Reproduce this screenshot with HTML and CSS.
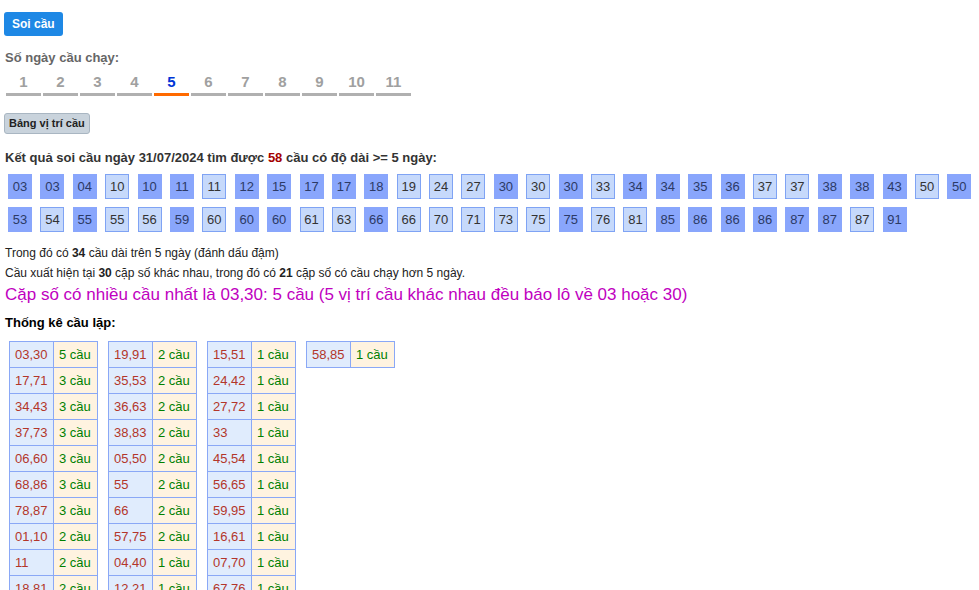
FILE: index.html
```html
<!DOCTYPE html>
<html lang="vi">
<head>
<meta charset="utf-8">
<title>Soi cầu</title>
<link rel="stylesheet" href="styles.css">
</head>
<body>
<div class="page">
  <div class="top"><button class="btn-soi">Soi cầu</button></div>
  <div class="label">Số ngày cầu chạy:</div>
  <div class="tabs">
    <span class="tab">1</span><span class="tab">2</span><span class="tab">3</span><span class="tab">4</span><span class="tab active">5</span><span class="tab">6</span><span class="tab">7</span><span class="tab">8</span><span class="tab">9</span><span class="tab">10</span><span class="tab">11</span>
  </div>
  <div class="bang-row"><button class="btn-bang">Bảng vị trí cầu</button></div>
  <div class="result">Kết quả soi cầu ngày 31/07/2024 tìm được <span class="red">58</span> cầu có độ dài &gt;= 5 ngày:</div>
  <div class="boxes">
    <span class="box d">03</span><span class="box d">03</span><span class="box d">04</span><span class="box">10</span><span class="box d">10</span><span class="box d">11</span><span class="box">11</span><span class="box d">12</span><span class="box d">15</span><span class="box d">17</span><span class="box d">17</span><span class="box d">18</span><span class="box">19</span><span class="box">24</span><span class="box">27</span><span class="box d">30</span><span class="box">30</span><span class="box d">30</span><span class="box">33</span><span class="box d">34</span><span class="box d">34</span><span class="box d">35</span><span class="box d">36</span><span class="box">37</span><span class="box">37</span><span class="box d">38</span><span class="box d">38</span><span class="box d">43</span><span class="box">50</span><span class="box d">50</span>
    <span class="box d">53</span><span class="box">54</span><span class="box d">55</span><span class="box">55</span><span class="box">56</span><span class="box d">59</span><span class="box">60</span><span class="box d">60</span><span class="box d">60</span><span class="box">61</span><span class="box">63</span><span class="box d">66</span><span class="box">66</span><span class="box">70</span><span class="box">71</span><span class="box">73</span><span class="box">75</span><span class="box d">75</span><span class="box">76</span><span class="box">81</span><span class="box d">85</span><span class="box d">86</span><span class="box d">86</span><span class="box d">86</span><span class="box d">87</span><span class="box d">87</span><span class="box">87</span><span class="box d">91</span>
  </div>
  <div class="info">Trong đó có <b>34</b> cầu dài trên 5 ngày (đánh dấu đậm)</div>
  <div class="info">Cầu xuất hiện tại <b>30</b> cặp số khác nhau, trong đó có <b>21</b> cặp số có cầu chạy hơn 5 ngày.</div>
  <div class="highlight">Cặp số có nhiều cầu nhất là 03,30: 5 cầu (5 vị trí cầu khác nhau đều báo lô về 03 hoặc 30)</div>
  <div class="stat-title">Thống kê cầu lặp:</div>
  <div class="tables">
    <table class="stat">
      <tr><td class="p">03,30</td><td class="c">5 cầu</td></tr>
      <tr><td class="p">17,71</td><td class="c">3 cầu</td></tr>
      <tr><td class="p">34,43</td><td class="c">3 cầu</td></tr>
      <tr><td class="p">37,73</td><td class="c">3 cầu</td></tr>
      <tr><td class="p">06,60</td><td class="c">3 cầu</td></tr>
      <tr><td class="p">68,86</td><td class="c">3 cầu</td></tr>
      <tr><td class="p">78,87</td><td class="c">3 cầu</td></tr>
      <tr><td class="p">01,10</td><td class="c">2 cầu</td></tr>
      <tr><td class="p">11</td><td class="c">2 cầu</td></tr>
      <tr><td class="p">18,81</td><td class="c">2 cầu</td></tr>
    </table>
    <table class="stat">
      <tr><td class="p">19,91</td><td class="c">2 cầu</td></tr>
      <tr><td class="p">35,53</td><td class="c">2 cầu</td></tr>
      <tr><td class="p">36,63</td><td class="c">2 cầu</td></tr>
      <tr><td class="p">38,83</td><td class="c">2 cầu</td></tr>
      <tr><td class="p">05,50</td><td class="c">2 cầu</td></tr>
      <tr><td class="p">55</td><td class="c">2 cầu</td></tr>
      <tr><td class="p">66</td><td class="c">2 cầu</td></tr>
      <tr><td class="p">57,75</td><td class="c">2 cầu</td></tr>
      <tr><td class="p">04,40</td><td class="c">1 cầu</td></tr>
      <tr><td class="p">12,21</td><td class="c">1 cầu</td></tr>
    </table>
    <table class="stat">
      <tr><td class="p">15,51</td><td class="c">1 cầu</td></tr>
      <tr><td class="p">24,42</td><td class="c">1 cầu</td></tr>
      <tr><td class="p">27,72</td><td class="c">1 cầu</td></tr>
      <tr><td class="p">33</td><td class="c">1 cầu</td></tr>
      <tr><td class="p">45,54</td><td class="c">1 cầu</td></tr>
      <tr><td class="p">56,65</td><td class="c">1 cầu</td></tr>
      <tr><td class="p">59,95</td><td class="c">1 cầu</td></tr>
      <tr><td class="p">16,61</td><td class="c">1 cầu</td></tr>
      <tr><td class="p">07,70</td><td class="c">1 cầu</td></tr>
      <tr><td class="p">67,76</td><td class="c">1 cầu</td></tr>
    </table>
    <table class="stat">
      <tr><td class="p">58,85</td><td class="c">1 cầu</td></tr>
    </table>
  </div>
</div>
</body>
</html>
```

FILE: styles.css
```css
html, body {
  margin: 0;
  padding: 0;
  background: #fff;
}
body {
  font-family: "Liberation Sans", Arial, sans-serif;
  color: #333;
}
.page {
  padding: 12px 0 0 4px;
}
.top {
  height: 24px;
}
.btn-soi {
  display: block;
  height: 24px;
  padding: 0 8px;
  margin: 0;
  border: 0;
  border-radius: 3px;
  background: #1e88e5;
  color: #fff;
  font-family: "Liberation Sans", Arial, sans-serif;
  font-weight: bold;
  font-size: 12px;
  line-height: 24px;
}
.label {
  margin-top: 14px;
  font-size: 13px;
  font-weight: bold;
  line-height: 16px;
  color: #666;
  padding-left: 1px;
}
.tabs {
  display: flex;
  gap: 2px;
  margin-top: 7px;
  padding-left: 2px;
}
.tab {
  width: 35px;
  text-align: center;
  font-size: 15px;
  font-weight: bold;
  line-height: 18px;
  color: #a0a0a0;
  padding-bottom: 2px;
  border-bottom: 3px solid #b0b0b0;
}
.tab.active {
  color: #0036d6;
  border-bottom-color: #ff6a00;
}
.bang-row {
  margin-top: 17px;
  height: 21px;
}
.btn-bang {
  display: block;
  height: 21px;
  margin: 0;
  padding: 0 4px;
  border: 1px solid #a9b6c2;
  border-radius: 3px;
  background: #c9d3dc;
  color: #222;
  font-family: "Liberation Sans", Arial, sans-serif;
  font-weight: bold;
  font-size: 11px;
  line-height: 19px;
}
.result {
  margin-top: 16px;
  font-size: 13px;
  font-weight: bold;
  line-height: 16px;
  color: #333;
  padding-left: 1px;
}
.red {
  color: #a40000;
}
.boxes {
  display: flex;
  flex-wrap: wrap;
  column-gap: 8.4px;
  row-gap: 8px;
  width: 966px;
  margin-top: 8px;
  padding-left: 4px;
}
.box {
  box-sizing: border-box;
  width: 24px;
  height: 25px;
  border: 1px solid #7fa3f4;
  background: #c6d9fb;
  text-align: center;
  font-size: 13px;
  line-height: 23px;
  color: #333;
}
.box.d {
  background: #89a6fc;
  border-color: #89a6fc;
  color: #2c3a66;
}
.info {
  font-size: 12px;
  line-height: 20px;
  color: #222;
  padding-left: 1px;
}
.boxes + .info {
  margin-top: 11px;
}
.highlight {
  font-size: 17px;
  line-height: 24px;
  color: #c000c0;
  padding-left: 1px;
}
.stat-title {
  margin-top: 8px;
  font-size: 13px;
  font-weight: bold;
  line-height: 16px;
  color: #000;
  padding-left: 1px;
}
.tables {
  display: flex;
  align-items: flex-start;
  gap: 10px;
  margin-top: 10px;
  padding-left: 5px;
}
.stat {
  border-collapse: collapse;
}
.stat td {
  width: 33px;
  height: 25px;
  padding: 0 5px;
  border: 1px solid #8aa8f6;
  font-size: 13px;
  white-space: nowrap;
  box-sizing: content-box;
}
.stat td.p {
  background: #e0ecfd;
  color: #b3362a;
}
.stat td.c {
  background: #fff3e0;
  color: #008000;
}
```
